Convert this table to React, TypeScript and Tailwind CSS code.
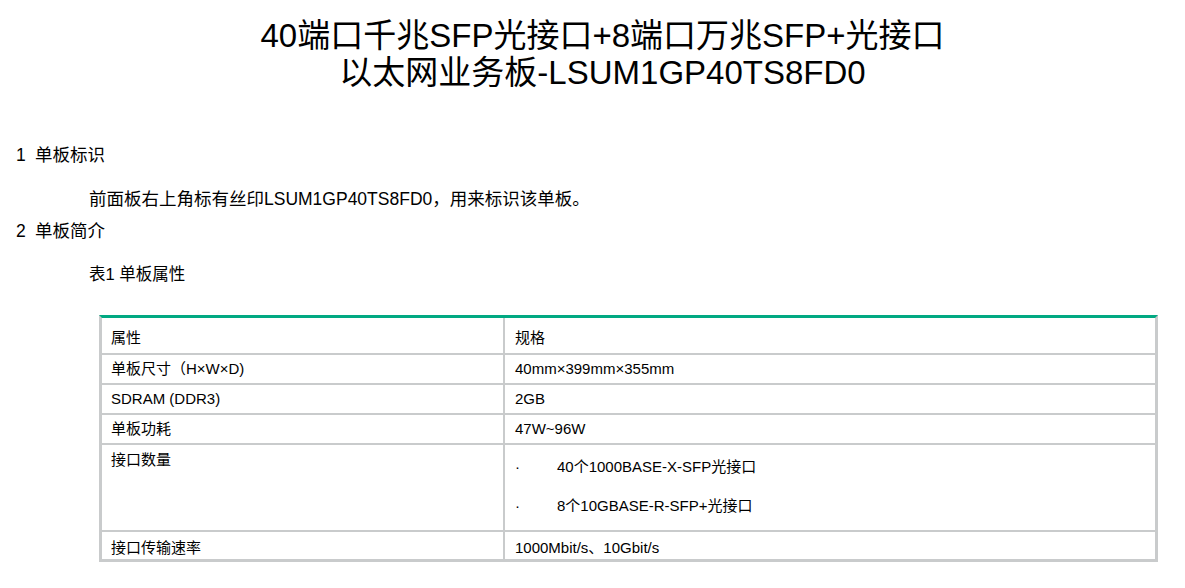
import React from 'react';

const font = { fontFamily: '"Liberation Sans", "Noto Sans CJK SC", sans-serif' };

interface Row {
  name: string;
  value: React.ReactNode;
  h: string;
  pt: string;
  last?: boolean;
}

export default function App() {
  const rows: Row[] = [
    { name: '属性', value: '规格', h: 'h-[37px]', pt: 'pt-[10px]' },
    { name: '单板尺寸（H×W×D)', value: '40mm×399mm×355mm', h: 'h-[30px]', pt: 'pt-[4px]' },
    { name: 'SDRAM (DDR3)', value: '2GB', h: 'h-[30px]', pt: 'pt-[4px]' },
    { name: '单板功耗', value: '47W~96W', h: 'h-[30px]', pt: 'pt-[4px]' },
    {
      name: '接口数量',
      value: (
        <div className="flex flex-col gap-[19px] pt-[7px]">
          <div className="flex">
            <span className="w-[42px]">·</span>
            <span>40个1000BASE-X-SFP光接口</span>
          </div>
          <div className="flex">
            <span className="w-[42px]">·</span>
            <span>8个10GBASE-R-SFP+光接口</span>
          </div>
        </div>
      ),
      h: 'h-[87px]',
      pt: 'pt-[5px]',
    },
    { name: '接口传输速率', value: '1000Mbit/s、10Gbit/s', h: 'h-[27px]', pt: 'pt-[6px]', last: true },
  ];

  return (
    <div className="w-[1185px] h-[588px] bg-white text-black overflow-hidden" style={font}>
      {/* title */}
      <div className="pt-[17px] pl-[20px] text-center text-[33px] leading-[37px]">
        <div>40端口千兆SFP光接口+8端口万兆SFP+光接口</div>
        <div>以太网业务板-LSUM1GP40TS8FD0</div>
      </div>

      <div className="mt-[52px] text-[17.5px] leading-[24px]">
        <div className="pl-[16px] flex">
          <span className="w-[19px]">1</span>
          <span>单板标识</span>
        </div>
        <div className="mt-[20px] pl-[89px]">前面板右上角标有丝印LSUM1GP40TS8FD0，用来标识该单板。</div>
        <div className="mt-[8px] pl-[16px] flex">
          <span className="w-[19px]">2</span>
          <span>单板简介</span>
        </div>
        <div className="mt-[19px] pl-[89px] text-[16.5px]">表1 单板属性</div>
      </div>

      {/* table */}
      <div className="mt-[29px] ml-[99px] w-[1059px] border-t-[3px] border-t-[#01a982] border-x-[3px] border-x-[#c9cbcc] border-b-[3px] border-b-[#c9cbcc] text-[15px] leading-[20px]">
        {rows.map((r) => (
          <div key={r.name} className={`flex ${r.h} ${r.last ? '' : 'border-b-2 border-[#c9cbcc]'}`}>
            <div className={`w-[403px] border-r-2 border-[#c9cbcc] pl-[9px] ${r.pt}`}>{r.name}</div>
            <div className={`flex-1 pl-[10px] ${r.pt}`}>{r.value}</div>
          </div>
        ))}
      </div>
    </div>
  );
}
